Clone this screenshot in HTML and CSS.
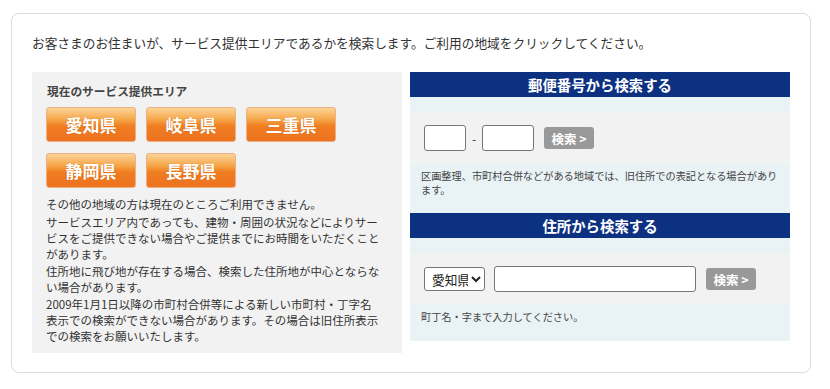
FILE: index.html
```html
<!DOCTYPE html>
<html lang="ja">
<head>
  <meta charset="UTF-8" />
  <meta name="viewport" content="width=device-width, initial-scale=1.0"/>
  <title>サービス提供エリア検索</title>
  <link rel="stylesheet" href="styles.css">
</head>
<body>

  <div class="card">
    <p class="intro">お客さまのお住まいが、サービス提供エリアであるかを検索します。ご利用の地域をクリックしてください。</p>

    <div class="columns">
      <!-- 提供エリア -->
      <div class="area">
        <h2 class="area-title">現在のサービス提供エリア</h2>
        <div class="pref-list">
          <a href="#" class="pref">愛知県</a>
          <a href="#" class="pref">岐阜県</a>
          <a href="#" class="pref">三重県</a>
          <a href="#" class="pref">静岡県</a>
          <a href="#" class="pref">長野県</a>
        </div>
        <p class="area-note first">その他の地域の方は現在のところご利用できません。</p>
        <p class="area-note">サービスエリア内であっても、建物・周囲の状況などによりサービスをご提供できない場合やご提供までにお時間をいただくことがあります。</p>
        <p class="area-note">住所地に飛び地が存在する場合、検索した住所地が中心とならない場合があります。</p>
        <p class="area-note">2009年1月1日以降の市町村合併等による新しい市町村・丁字名表示での検索ができない場合があります。その場合は旧住所表示での検索をお願いいたします。</p>
      </div>

      <!-- 検索 -->
      <div class="search">
        <div class="search-block">
          <h3 class="search-head">郵便番号から検索する</h3>
          <form class="search-form">
            <input type="text" class="zip zip3" maxlength="3" />
            <span class="dash">-</span>
            <input type="text" class="zip zip4" maxlength="4" />
            <button type="submit" class="btn-search">検索 &gt;</button>
          </form>
          <p class="search-note">区画整理、市町村合併などがある地域では、旧住所での表記となる場合があります。</p>
        </div>

        <div class="search-block">
          <h3 class="search-head">住所から検索する</h3>
          <form class="search-form">
            <select class="pref-select">
              <option>愛知県</option>
              <option>岐阜県</option>
              <option>三重県</option>
              <option>静岡県</option>
              <option>長野県</option>
            </select>
            <input type="text" class="addr" />
            <button type="submit" class="btn-search">検索 &gt;</button>
          </form>
          <p class="search-note">町丁名・字まで入力してください。</p>
        </div>
      </div>
    </div>
  </div>

</body>
</html>
```

FILE: styles.css
```css
    body {
      font-family: "Noto Sans CJK JP", "Noto Sans", sans-serif;
      background-color: #fff;
      color: #333;
      margin: 0;
      padding: 13px 0 0 11px;
    }
    .card {
      width: 758px;
      padding: 20px 20px 19px;
      border: 1px solid #dcdcdc;
      border-radius: 8px;
    }
    .intro {
      margin: 0 0 21px;
      font-size: 12.7px;
      line-height: 17px;
    }
    .columns {
      display: flex;
      align-items: flex-start;
      gap: 8px;
    }

    /* left */
    .area {
      width: 335px;
      padding: 10px 21px 9px 14px;
      background-color: #f2f2f2;
    }
    .area-title {
      margin: 0 0 8px 1px;
      font-size: 11.7px;
      line-height: 17px;
      color: #444;
    }
    .pref-list {
      display: flex;
      flex-wrap: wrap;
      gap: 11px 10px;
      width: 300px;
    }
    .pref {
      display: block;
      width: 88px;
      height: 33px;
      line-height: 33px;
      text-align: center;
      color: white;
      font-size: 17px;
      font-weight: bold;
      text-decoration: none;
      text-shadow: 0 0 1px rgba(160, 70, 0, 0.5);
      border: 1px solid #eab184;
      border-radius: 3px;
      background: linear-gradient(#fcd497 0%, #f6a649 35%, #f07d20 55%, #ee7220 100%);
    }
    .pref:hover {
      opacity: 0.85;
    }
    .area-note {
      margin: 0;
      font-size: 11.5px;
      line-height: 16px;
      color: #333;
    }
    .area-note.first {
      margin-top: 8px;
      margin-bottom: 2px;
    }
    .area-note + .area-note {
      margin-top: 1px;
    }

    /* right */
    .search {
      width: 380px;
    }
    .search-block {
      background-color: #e9f2f5;
    }
    .search-head {
      margin: 0;
      height: 25px;
      line-height: 25px;
      text-align: center;
      font-size: 14.4px;
      color: white;
      background-color: #0c3181;
    }
    .search-form {
      display: flex;
      align-items: center;
      height: 52px;
      margin-top: 15px;
      padding-left: 14px;
      background-color: #f2f2f2;
    }
    .zip, .addr {
      box-sizing: border-box;
      height: 26px;
      border: 1px solid #767676;
      border-radius: 3px;
      background: white;
      font-size: 13px;
      padding: 0 4px;
    }
    .zip3 {
      width: 42px;
    }
    .zip4 {
      width: 52px;
    }
    .dash {
      width: 16px;
      text-align: center;
      font-size: 12px;
      color: #333;
    }
    .addr {
      width: 202px;
      margin-left: 9px;
    }
    .pref-select {
      box-sizing: border-box;
      width: 61px;
      height: 24px;
      font-family: "Noto Sans CJK JP", sans-serif;
      font-size: 12.7px;
      color: #222;
      border: 1px solid #767676;
      border-radius: 3px;
      background: white;
      padding: 0 0 0 3px;
    }
    .btn-search {
      height: 22px;
      width: 50px;
      margin-left: 10px;
      padding: 0;
      border: none;
      border-radius: 3px;
      background-color: #999;
      color: white;
      font-family: "Noto Sans CJK JP", sans-serif;
      font-size: 12.5px;
      font-weight: bold;
      cursor: pointer;
    }
    .search-note {
      margin: 0;
      padding: 5px 6px 17px 11px;
      font-size: 10.2px;
      line-height: 13.5px;
      color: #444;
    }
```
